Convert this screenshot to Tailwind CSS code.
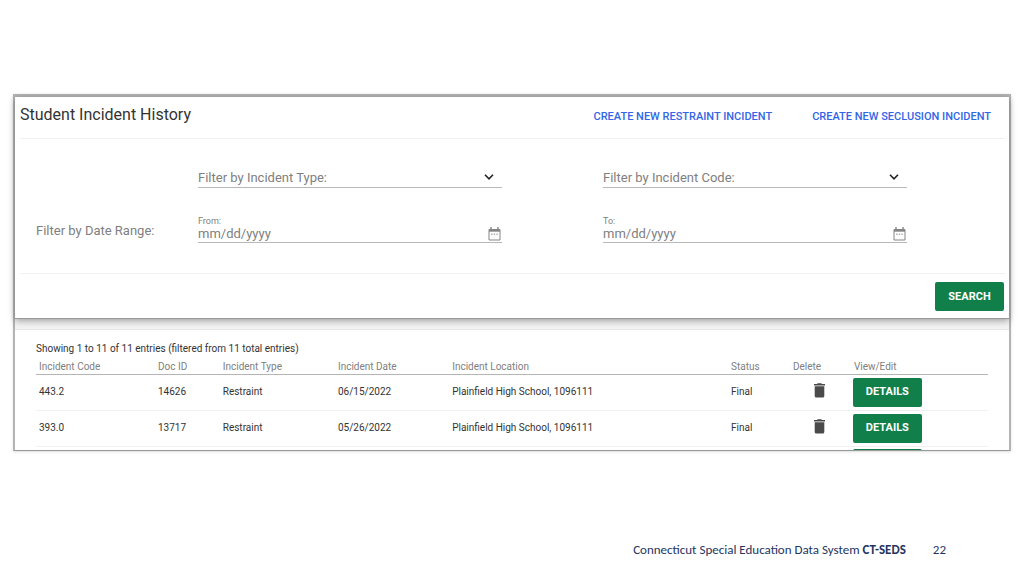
<!DOCTYPE html>
<html lang="en">

<head>
    <meta charset="UTF-8">
    <meta name="viewport" content="width=device-width, initial-scale=1.0">
    <title>Student Incident History</title>
    <script src="https://cdn.jsdelivr.net/npm/@tailwindcss/browser@4"></script>
</head>

<body class="bg-white font-[Roboto,sans-serif]">
    <div class="flex flex-col min-h-screen px-[13px] pt-[94px]">

        <!-- Panel -->
        <main class="border-2 border-t-3 border-b border-[#b3b3b3] border-b-[#999] shadow-sm">

            <!-- Filters -->
            <form class="relative border-b border-[#999] shadow-[0_2px_7px_rgba(0,0,0,0.35)]">
                <div class="flex items-center justify-between h-[42px] ml-[5px] mr-1 pr-[14px] border-b border-[#f0f0f0]">
                    <h1 class="text-[16px] leading-5 text-[#333] pb-[6px]">Student Incident History</h1>
                    <div class="flex gap-10 text-[11px] leading-4 font-medium text-[#3366e6] pb-[2px]">
                        <a href="#">CREATE NEW RESTRAINT INCIDENT</a>
                        <a href="#">CREATE NEW SECLUSION INCIDENT</a>
                    </div>
                </div>

                <div class="grid grid-cols-12 gap-y-[31px] pl-[21px] pr-px pt-[28px] pb-[30px] text-[13px] leading-4 text-[#808080]">
                    <div class="col-span-5 col-start-3">
                        <div class="relative w-3/4">
                            <select aria-label="Filter by Incident Type" class="block appearance-none w-full h-[21px] pt-px border-b border-[#b8b8b8] outline-none">
                                <option>Filter by Incident Type:</option>
                            </select>
                            <svg class="absolute right-2 top-[6px] w-[10px] h-[8px] text-[#222] pointer-events-none" viewBox="0 0 10 8" fill="none" stroke="currentColor" stroke-width="1.6">
                                <path d="M1 1.8l4 4 4-4" />
                            </svg>
                        </div>
                    </div>
                    <div class="col-span-5">
                        <div class="relative w-3/4">
                            <select aria-label="Filter by Incident Code" class="block appearance-none w-full h-[21px] pt-px border-b border-[#b8b8b8] outline-none">
                                <option>Filter by Incident Code:</option>
                            </select>
                            <svg class="absolute right-2 top-[6px] w-[10px] h-[8px] text-[#222] pointer-events-none" viewBox="0 0 10 8" fill="none" stroke="currentColor" stroke-width="1.6">
                                <path d="M1 1.8l4 4 4-4" />
                            </svg>
                        </div>
                    </div>

                    <div class="col-span-2 pt-1">Filter by Date Range:</div>
                    <div class="col-span-5 -mt-1">
                        <label for="from" class="block pt-[2px] text-[9px] leading-[8px]">From:</label>
                        <div class="flex items-center w-3/4 border-b border-[#b8b8b8]">
                            <input id="from" type="text" placeholder="mm/dd/yyyy" class="flex-1 min-w-0 h-[17px] placeholder-[#808080] outline-none">
                            <button type="button" aria-label="Choose from date" class="pr-[1px]">
                                <svg class="w-[13px] h-[14px] text-[#858585]" viewBox="0 0 13 14" fill="none" stroke="currentColor">
                                    <path d="M1 2.5h11v10.5H1z" />
                                    <path d="M1 3.5h11" stroke-width="2.4" />
                                    <path d="M3 0v2.5M10 0v2.5" stroke-width="1.4" />
                                    <path d="M3.2 7.2h1.4M5.8 7.2h1.4M8.4 7.2h1.4" stroke-width="1" />
                                </svg>
                            </button>
                        </div>
                    </div>
                    <div class="col-span-5 -mt-1">
                        <label for="to" class="block pt-[2px] text-[9px] leading-[8px]">To:</label>
                        <div class="flex items-center w-3/4 border-b border-[#b8b8b8]">
                            <input id="to" type="text" placeholder="mm/dd/yyyy" class="flex-1 min-w-0 h-[17px] placeholder-[#808080] outline-none">
                            <button type="button" aria-label="Choose to date" class="pr-[1px]">
                                <svg class="w-[13px] h-[14px] text-[#858585]" viewBox="0 0 13 14" fill="none" stroke="currentColor">
                                    <path d="M1 2.5h11v10.5H1z" />
                                    <path d="M1 3.5h11" stroke-width="2.4" />
                                    <path d="M3 0v2.5M10 0v2.5" stroke-width="1.4" />
                                    <path d="M3.2 7.2h1.4M5.8 7.2h1.4M8.4 7.2h1.4" stroke-width="1" />
                                </svg>
                            </button>
                        </div>
                    </div>
                </div>

                <div class="flex justify-end ml-[5px] mr-1 pt-2 pb-[7px] pr-px border-t border-[#f0f0f0]">
                    <button type="button" class="w-[69px] h-[29px] rounded-xs bg-[#117f4a] text-white text-[11px] leading-4 font-bold">SEARCH</button>
                </div>
            </form>

            <!-- Results -->
            <div class="h-[11px] bg-[#f4f4f4] border-b border-[#e8e8e8]"></div>
            <section class="pl-[21px] pr-[21px] pt-[11px] text-[10px] leading-4 text-[#333]">
                <p>Showing 1 to 11 of 11 entries (filtered from 11 total entries)</p>
                <div class="max-h-[93px] overflow-hidden">
                    <table class="w-full table-fixed border-collapse text-left">
                        <thead class="leading-3 text-[#808080]">
                            <tr class="h-[17px] border-b border-[#b5b5b5]">
                                <th class="w-[12.5%] px-[3px] pt-1 font-normal">Incident Code</th>
                                <th class="w-[6.8%] px-[3px] pt-1 font-normal">Doc ID</th>
                                <th class="w-[12.1%] px-[3px] pt-1 font-normal">Incident Type</th>
                                <th class="w-[12%] px-[3px] pt-1 font-normal">Incident Date</th>
                                <th class="w-[29.3%] px-[3px] pt-1 font-normal">Incident Location</th>
                                <th class="w-[6.5%] px-[3px] pt-1 font-normal">Status</th>
                                <th class="w-[6.4%] px-[3px] pt-1 font-normal">Delete</th>
                                <th class="w-[14.4%] px-[3px] pt-1 font-normal">View/Edit</th>
                            </tr>
                        </thead>
                        <tbody>
                            <tr class="h-9 border-b border-[#f0f0f0]">
                                <td class="px-[3px]">443.2</td>
                                <td class="px-[3px]">14626</td>
                                <td class="px-[3px]">Restraint</td>
                                <td class="px-[3px]">06/15/2022</td>
                                <td class="px-[3px]">Plainfield High School, 1096111</td>
                                <td class="px-[3px]">Final</td>
                                <td class="pl-6 pb-1">
                                    <button type="button" aria-label="Delete 443.2" class="block">
                                        <svg class="w-[11px] h-[15px] text-[#4a4a4a]" viewBox="0 0 11 15" fill="currentColor">
                                            <path d="M0 1h3l.7-.8h3.6L8 1h3v1.4H0zM.7 3.3h9.6V13a1.5 1.5 0 01-1.5 1.5H2.2A1.5 1.5 0 01.7 13z" />
                                        </svg>
                                    </button>
                                </td>
                                <td class="px-[2px]"><button type="button" class="block w-[69px] h-[29px] rounded-xs bg-[#117f4a] text-white text-[11px] leading-4 font-bold">DETAILS</button></td>
                            </tr>
                            <tr class="h-9 border-b border-[#f0f0f0]">
                                <td class="px-[3px]">393.0</td>
                                <td class="px-[3px]">13717</td>
                                <td class="px-[3px]">Restraint</td>
                                <td class="px-[3px]">05/26/2022</td>
                                <td class="px-[3px]">Plainfield High School, 1096111</td>
                                <td class="px-[3px]">Final</td>
                                <td class="pl-6 pb-1">
                                    <button type="button" aria-label="Delete 393.0" class="block">
                                        <svg class="w-[11px] h-[15px] text-[#4a4a4a]" viewBox="0 0 11 15" fill="currentColor">
                                            <path d="M0 1h3l.7-.8h3.6L8 1h3v1.4H0zM.7 3.3h9.6V13a1.5 1.5 0 01-1.5 1.5H2.2A1.5 1.5 0 01.7 13z" />
                                        </svg>
                                    </button>
                                </td>
                                <td class="px-[2px]"><button type="button" class="block w-[69px] h-[29px] rounded-xs bg-[#117f4a] text-white text-[11px] leading-4 font-bold">DETAILS</button></td>
                            </tr>
                            <!-- next row, cut off by the panel -->
                            <tr class="h-9">
                                <td colspan="7"></td>
                                <td class="px-[2px] pt-[2px] align-top"><button type="button" aria-label="Details" class="block w-[69px] h-[29px] rounded-xs bg-[#117f4a]"></button></td>
                            </tr>
                        </tbody>
                    </table>
                </div>
            </section>
        </main>

        <!-- Footer -->
        <footer class="flex justify-end gap-[27px] mt-auto pr-[65px] pb-[18px] font-[Carlito,Lato,sans-serif] text-[13px] leading-4 text-[#25355f]">
            <p>Connecticut Special Education Data System <b>CT-SEDS</b></p>
            <span>22</span>
        </footer>
    </div>
</body>

</html>
